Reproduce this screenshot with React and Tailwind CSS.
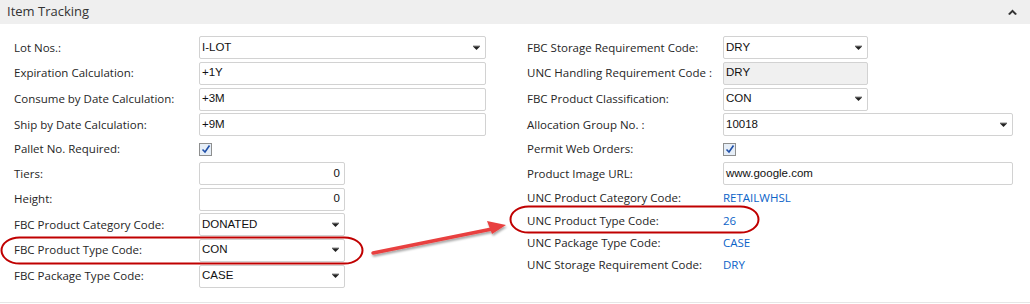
const LEFT = [
  { label: 'Lot Nos.:', value: 'I-LOT', type: 'select', h: 'h-[25px]' },
  { label: 'Expiration Calculation:', value: '+1Y', type: 'text', h: 'h-[26px]' },
  { label: 'Consume by Date Calculation:', value: '+3M', type: 'text', h: 'h-[26px]' },
  { label: 'Ship by Date Calculation:', value: '+9M', type: 'text', h: 'h-[25px]' },
  { label: 'Pallet No. Required:', type: 'check', h: 'h-[24px]' },
  { label: 'Tiers:', value: '0', type: 'number', h: 'h-[25px]', w: 'w-[146px]' },
  { label: 'Height:', value: '0', type: 'number', h: 'h-[26px]', w: 'w-[146px]' },
  { label: 'FBC Product Category Code:', value: 'DONATED', type: 'select', h: 'h-[25px]', w: 'w-[146px]' },
  { label: 'FBC Product Type Code:', value: 'CON', type: 'select', h: 'h-[26px]', w: 'w-[146px]' },
  { label: 'FBC Package Type Code:', value: 'CASE', type: 'select', h: 'h-[26px]', w: 'w-[146px]' },
];

const RIGHT = [
  { label: 'FBC Storage Requirement Code:', value: 'DRY', type: 'select', h: 'h-[25px]', w: 'w-[145px]' },
  { label: 'UNC Handling Requirement Code :', value: 'DRY', type: 'readonly', h: 'h-[26px]', w: 'w-[145px]' },
  { label: 'FBC Product Classification:', value: 'CON', type: 'select', h: 'h-[26px]', w: 'w-[145px]' },
  { label: 'Allocation Group No. :', value: '10018', type: 'select', h: 'h-[25px]' },
  { label: 'Permit Web Orders:', type: 'check', h: 'h-[24px]' },
  { label: 'Product Image URL:', value: 'www.google.com', type: 'text', h: 'h-[25px]' },
  { label: 'UNC Product Category Code:', value: 'RETAILWHSL', type: 'link', h: 'h-[24px]' },
  { label: 'UNC Product Type Code:', value: '26', type: 'link', h: 'h-[22px]' },
  { label: 'UNC Package Type Code:', value: 'CASE', type: 'link', h: 'h-[22px]' },
  { label: 'UNC Storage Requirement Code:', value: 'DRY', type: 'link', h: 'h-[22px]' },
];

const label = "font-['Open_Sans',sans-serif] text-[11.5px] text-[#262626]";
const value = "font-['Liberation_Sans',sans-serif] text-[11.5px] text-[#111]";

function Caret() {
  return (
    <svg width="7" height="5" viewBox="0 0 7 5" className="absolute right-[5px] top-1/2 -translate-y-1/2">
      <rect x="0" y="0" width="7" height="1" fill="#222" />
      <polygon points="0,1 7,1 3.5,4.5" fill="#222" />
    </svg>
  );
}

function Field({ f, width }) {
  if (f.type === 'check') {
    return (
      <div className="flex h-[13px] w-[13px] items-center justify-center border border-[#8e8f8f] bg-[#e6eef7]">
        <svg width="10" height="10" viewBox="0 0 10 10">
          <path d="M1.5 5.5 L4 8 L8.5 1.5" stroke="#1f4fa8" strokeWidth="1.6" fill="none" />
        </svg>
      </div>
    );
  }
  if (f.type === 'link') {
    return <span className={`${label} !text-[#0b63c8]`}>{f.value}</span>;
  }
  return (
    <div
      className={`relative flex h-[23px] items-center rounded-[2px] border border-[#d2d2d2] px-[2px] ${f.w || width} ${
        f.type === 'readonly' ? 'bg-[#f0f0f0]' : 'bg-white'
      } ${f.type === 'number' ? 'justify-end pr-[4px]' : ''}`}
    >
      <span className={value}>{f.value}</span>
      {f.type === 'select' && <Caret />}
    </div>
  );
}

function Column({ rows, labelW, width }) {
  return (
    <div className="flex flex-col">
      {rows.map((f) => (
        <div key={f.label} className={`flex items-center ${f.h}`}>
          <div className={`${labelW} shrink-0 ${label}`}>{f.label}</div>
          <Field f={f} width={width} />
        </div>
      ))}
    </div>
  );
}

export default function App() {
  return (
    <div className="relative h-[304px] w-[1030px] overflow-hidden bg-white">
      <div className="flex h-[24px] items-center justify-between bg-[#efefef] pl-[7px] pr-[13px]">
        <span className="font-['Open_Sans',sans-serif] text-[13px] text-[#333]">Item Tracking</span>
        <svg width="9" height="6" viewBox="0 0 9 6">
          <polygon points="0,5 4.5,0.5 9,5 7.2,6 4.5,3.2 1.8,6" fill="#333" />
        </svg>
      </div>

      <div className="flex pl-[14px] pt-[11px]">
        <div className="w-[513px]">
          <Column rows={LEFT} labelW="w-[185px]" width="w-[287px]" />
        </div>
        <Column rows={RIGHT} labelW="w-[196px]" width="w-[290px]" />
      </div>

      <div className="absolute bottom-[1px] left-0 h-px w-full bg-[#e6e6e6]" />

      <svg className="pointer-events-none absolute inset-0" width="1030" height="304">
        <defs>
          <filter id="sh" x="-10%" y="-50%" width="120%" height="200%">
            <feDropShadow dx="1" dy="2" stdDeviation="1.2" floodColor="#000" floodOpacity="0.35" />
          </filter>
        </defs>
        <rect x="1.5" y="237.5" width="361" height="26" rx="18" ry="13" fill="none" stroke="#c00000" strokeWidth="2" />
        <rect x="510.5" y="206.5" width="248" height="26" rx="18" ry="13" fill="none" stroke="#c00000" strokeWidth="2" />
        <g filter="url(#sh)">
          <line x1="373" y1="253" x2="492" y2="229" stroke="#e8413f" strokeWidth="3.5" strokeLinecap="round" />
          <polygon points="506,225 487,221 492,234" fill="#e8413f" />
        </g>
      </svg>
    </div>
  );
}
